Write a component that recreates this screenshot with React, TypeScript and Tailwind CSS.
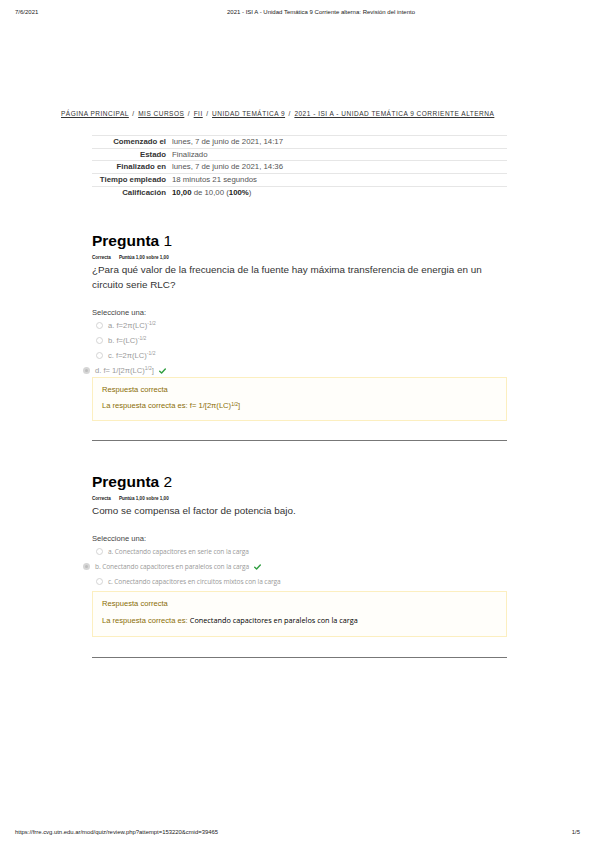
import type { ReactNode } from "react";

/* ---------------------------------------------------------------------
 * Revisión del intento — página impresa (PDF) de Moodle.
 * ------------------------------------------------------------------- */

const SANS = "font-['Liberation_Sans',Arial,sans-serif]";
const OPEN = "font-['Open_Sans','Noto_Sans',sans-serif]";

function Radio({ checked = false }: { checked?: boolean }) {
  if (checked) {
    return (
      <span className="inline-flex h-[7px] w-[7px] shrink-0 items-center justify-center rounded-full bg-[#d6d6d6]">
        <span className="h-[3px] w-[3px] rounded-full bg-[#bdbdbd]" />
      </span>
    );
  }
  return (
    <span className="inline-block h-[7px] w-[7px] shrink-0 rounded-full border border-[#d4d4d4] bg-white" />
  );
}

function Tick() {
  return (
    <svg viewBox="0 0 10 8" className="h-[6px] w-[7px]" aria-hidden>
      <path
        d="M1 4.2 L3.7 6.8 L9 1.2"
        fill="none"
        stroke="#2e9e3f"
        strokeWidth="2"
        strokeLinecap="round"
        strokeLinejoin="round"
      />
    </svg>
  );
}

type Option = { label: ReactNode; checked?: boolean };

function Question({
  num,
  text,
  options,
  answer,
  optionClass,
  top,
  boxClass,
  hrClass,
}: {
  num: number;
  text: ReactNode;
  options: Option[];
  answer: ReactNode;
  optionClass: string;
  top: string;
  boxClass: string;
  hrClass: string;
}) {
  return (
    <section className={top}>
      <h2 className={`${SANS} text-[15.5px] leading-[20px] text-black`}>
        <span className="font-bold">Pregunta</span> {num}
      </h2>
      <div className={`${SANS} mt-[3px] flex gap-[8px] text-[4.6px] leading-[7px] text-[#222] font-bold`}>
        <span>Correcta</span>
        <span>Puntúa 1,00 sobre 1,00</span>
      </div>
      <div className={`${SANS} mt-[1px] text-[9.9px] leading-[15px] text-[#333]`}>{text}</div>
      <p className={`${SANS} mt-[16px] text-[7.6px] leading-[10px] text-[#444]`}>Seleccione una:</p>
      <div className="flex flex-col">
        {options.map((o, i) => (
          <div
            key={i}
            className={`flex h-[15px] items-center gap-[5px] ${o.checked ? "-ml-[9px]" : "pl-[4px]"}`}
          >
            <Radio checked={o.checked} />
            <span className={`${optionClass} leading-[10px] text-[#9a9a9a]`}>{o.label}</span>
            {o.checked ? <Tick /> : null}
          </div>
        ))}
      </div>
      <div className={`${boxClass} border border-[#fcefc0] bg-[#fffefa] px-[9px] pt-[6px]`}>
        <p className={`${SANS} text-[7.6px] leading-[12px] text-[#8a6d05]`}>Respuesta correcta</p>
        <p className={`${SANS} mt-[4px] text-[7.6px] leading-[12px] text-[#8a6d05]`}>{answer}</p>
      </div>
      <hr className={`${hrClass} border-t border-[#777]`} />
    </section>
  );
}

const SUMMARY: Array<{ label: string; value: ReactNode }> = [
  { label: "Comenzado el", value: "lunes, 7 de junio de 2021, 14:17" },
  { label: "Estado", value: "Finalizado" },
  { label: "Finalizado en", value: "lunes, 7 de junio de 2021, 14:36" },
  { label: "Tiempo empleado", value: "18 minutos 21 segundos" },
  {
    label: "Calificación",
    value: (
      <>
        <b className="text-[#222]">10,00</b> de 10,00 (<b className="text-[#222]">100%</b>)
      </>
    ),
  },
];

const CRUMBS = [
  "PÁGINA PRINCIPAL",
  "MIS CURSOS",
  "FII",
  "UNIDAD TEMÁTICA 9",
  "2021 - ISI A - UNIDAD TEMÁTICA 9 CORRIENTE ALTERNA",
];

export default function App() {
  return (
    <div className={`${SANS} flex h-[848px] w-[599px] flex-col bg-white`}>
      {/* cabecera de impresión */}
      <header className="flex h-[25px] items-center px-[15px] text-[6px] text-[#222]">
        <span className="w-[60px]">7/6/2021</span>
        <span className="flex-1 pr-[17px] text-center">
          2021 - ISI A - Unidad Temática 9 Corriente alterna: Revisión del intento
        </span>
      </header>

      <main className="flex-1">
        <nav className="mt-[84px] flex gap-[3.5px] pl-[61px] text-[6.5px] tracking-[0.5px] text-[#333]">
          {CRUMBS.map((c, i) => (
            <span key={c} className="flex gap-[3.5px]">
              {i > 0 ? <span>/</span> : null}
              <span className="underline underline-offset-[1px]">{c}</span>
            </span>
          ))}
        </nav>

        <div className="mx-[92px] mt-[16px]">
          <table className="w-full border-collapse text-[7.8px] leading-[11.75px]">
            <tbody>
              {SUMMARY.map((r) => (
                <tr key={r.label} className="h-[12.8px] border-t border-[#e6e6e6]">
                  <th className="w-[80px] py-0 pr-[6px] text-right font-bold text-[#333]">
                    {r.label}
                  </th>
                  <td className="py-0 text-[#555]">{r.value}</td>
                </tr>
              ))}
            </tbody>
          </table>

          <Question
            top="pt-[32px]"
            boxClass="-mt-[1px] pb-[8px]"
            hrClass="mt-[19px]"
            num={1}
            text={
              <>
                ¿Para qué valor de la frecuencia de la fuente hay máxima transferencia de energia en un
                circuito serie RLC?
              </>
            }
            optionClass={`${SANS} text-[7.6px]`}
            options={[
              { label: <>a. f=2π(LC)<sup className="text-[5px]">-1/2</sup></> },
              { label: <>b. f=(LC)<sup className="text-[5px]">-1/2</sup></> },
              { label: <>c. f=2π(LC)<sup className="text-[5px]">-1/2</sup></> },
              { label: <>d. f= 1/[2π(LC)<sup className="text-[5px]">1/2</sup>]</>, checked: true },
            ]}
            answer={
              <>
                La respuesta correcta es: f= 1/[2π(LC)<sup className="text-[5px]">1/2</sup>]
              </>
            }
          />

          <Question
            top="pt-[31px]"
            boxClass="mt-[2px] pb-[9px]"
            hrClass="mt-[20px]"
            num={2}
            text="Como se compensa el factor de potencia bajo."
            optionClass={`${OPEN} text-[6.6px] tracking-[-0.1px]`}
            options={[
              { label: "a. Conectando capacitores en serie con la carga" },
              { label: "b. Conectando capacitores en paralelos con la carga", checked: true },
              { label: "c. Conectando capacitores en circuitos mixtos con la carga" },
            ]}
            answer={
              <>
                La respuesta correcta es:{" "}
                <span className={`${OPEN} text-[7.3px] text-black`}>
                  Conectando capacitores en paralelos con la carga
                </span>
              </>
            }
          />
        </div>
      </main>

      {/* pie de impresión */}
      <footer className="flex h-[30px] items-center justify-between px-[15px] pb-[2px] text-[5.9px] text-[#222]">
        <span>https://frre.cvg.utn.edu.ar/mod/quiz/review.php?attempt=153220&amp;cmid=39465</span>
        <span className="pr-[4px]">1/5</span>
      </footer>
    </div>
  );
}
